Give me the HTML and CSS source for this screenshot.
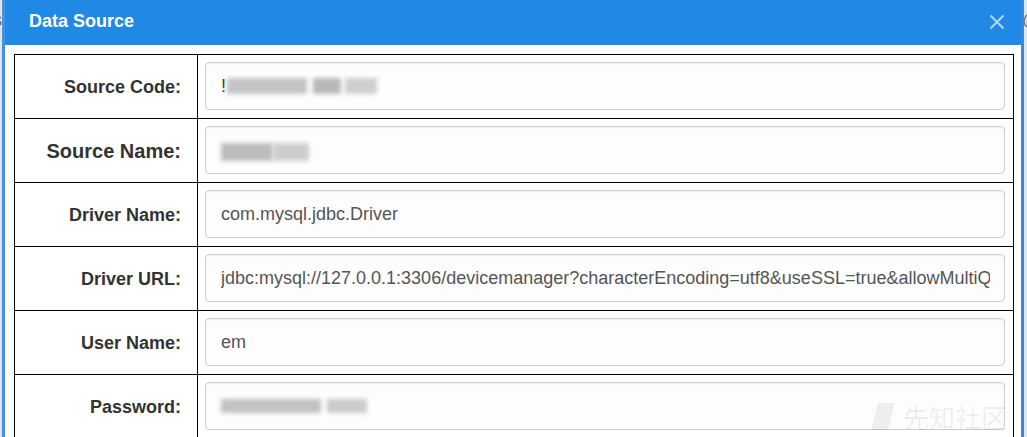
FILE: index.html
```html
<!DOCTYPE html>
<html>
<head>
<meta charset="utf-8">
<link rel="stylesheet" href="styles.css">
</head>
<body>
<span class="bg-char bg-left">s</span>
<span class="bg-char bg-right">@</span>
<div class="dialog">
  <div class="header">
    <span class="title">Data Source</span>
    <svg class="close" width="16" height="16" viewBox="0 0 16 16"><path d="M1.5 1.5L14.5 14.5M14.5 1.5L1.5 14.5" stroke="#b3d7f6" stroke-width="2" fill="none"/></svg>
  </div>
  <div class="form">
    <div class="row">
      <div class="label">Source Code:</div>
      <div class="cell"><div class="input"><span class="val dark">!</span><span class="blur b1"></span><span class="blur b2"></span><span class="blur b3"></span></div></div>
    </div>
    <div class="row">
      <div class="label big">Source Name:</div>
      <div class="cell"><div class="input"><span class="blur b4"></span><span class="blur b5"></span></div></div>
    </div>
    <div class="row">
      <div class="label">Driver Name:</div>
      <div class="cell"><div class="input"><span class="val">com.mysql.jdbc.Driver</span></div></div>
    </div>
    <div class="row">
      <div class="label">Driver URL:</div>
      <div class="cell"><div class="input"><span class="val">jdbc:mysql://127.0.0.1:3306/devicemanager?characterEncoding=utf8&amp;useSSL=true&amp;allowMultiQueries=true</span></div></div>
    </div>
    <div class="row">
      <div class="label">User Name:</div>
      <div class="cell"><div class="input"><span class="val">em</span></div></div>
    </div>
    <div class="row">
      <div class="label">Password:</div>
      <div class="cell"><div class="input"><span class="blur b6"></span><span class="blur b7"></span></div></div>
    </div>
  </div>
  <div class="watermark"><span class="wm-logo"></span>先知社区</div>
</div>
</body>
</html>
```
FILE: styles.css
```css
html, body {
  margin: 0;
  padding: 0;
}
body {
  width: 1027px;
  height: 437px;
  overflow: hidden;
  background: #dde5ee;
  position: relative;
  font-family: "Liberation Sans", Arial, sans-serif;
}
.bg-char {
  position: absolute;
  top: 10px;
  font-size: 18px;
  color: #666;
}
.bg-left { left: -7px; }
.bg-right { left: 1022px; }
.dialog {
  position: relative;
  margin-left: 2px;
  width: 1022px;
  height: 437px;
  overflow: hidden;
  box-sizing: border-box;
  background: #fff;
  border-left: 3px solid #4690dc;
  border-right: 3px solid #3f87d6;
}
.header {
  height: 45px;
  background: #2089e6;
  display: flex;
  align-items: center;
  justify-content: space-between;
  padding: 0 16px 0 24px;
}
.title {
  color: #fff;
  font-weight: bold;
  font-size: 18px;
  margin-top: -2px;
}
.close {
  margin-top: -2px;
}
.form {
  margin: 9px 7px 0 9px;
  border: 1px solid #000;
  border-bottom: none;
}
.row {
  display: flex;
  height: 63px;
  border-bottom: 1px solid #000;
}
.label {
  width: 183px;
  flex: none;
  border-right: 1px solid #000;
  display: flex;
  align-items: center;
  justify-content: flex-end;
  padding: 2px 16px 0 0;
  box-sizing: border-box;
  font-weight: bold;
  font-size: 18px;
  color: #333;
}
.label.big {
  font-size: 20px;
}
.cell {
  flex: 1;
  display: flex;
  align-items: center;
  padding: 0 8px 1px 7px;
  min-width: 0;
}
.input {
  flex: 1;
  height: 48px;
  box-sizing: border-box;
  border: 1px solid #cfcfcf;
  border-radius: 4px;
  background: #fdfdfd;
  box-shadow: inset 0 1px 2px rgba(0,0,0,0.06);
  display: flex;
  align-items: center;
  padding: 0 14px 0 15px;
  overflow: hidden;
  white-space: nowrap;
  min-width: 0;
}
.val {
  font-size: 18px;
  color: #555;
  overflow: hidden;
}
.val.dark {
  color: #333;
}
.blur {
  display: inline-block;
  height: 16px;
  background: #bdbdbd;
  filter: blur(2px);
}
.b1 { width: 80px; margin-left: 1px; background: #c4c4c4; }
.b2 { width: 28px; margin-left: 6px; background: #b8b8b8; }
.b3 { width: 32px; margin-left: 4px; background: #cfcfcf; }
.b4 { width: 52px; background: #bcbcbc; height: 18px; margin-top: 4px; }
.b5 { width: 36px; background: #cdcdcd; height: 18px; margin-top: 4px; }
.b6 { width: 100px; background: #c2c2c2; height: 14px; }
.b7 { width: 40px; margin-left: 6px; background: #cbcbcb; height: 14px; }
.watermark {
  position: absolute;
  left: 866px;
  top: 398px;
  display: flex;
  align-items: center;
  gap: 8px;
  font-family: "Noto Sans CJK SC", sans-serif;
  font-size: 26px;
  color: rgba(0,0,0,0.07);
}
.wm-logo {
  width: 24px;
  height: 28px;
  background: rgba(0,0,0,0.06);
  clip-path: polygon(30% 0, 100% 0, 70% 100%, 0 100%);
}
```
